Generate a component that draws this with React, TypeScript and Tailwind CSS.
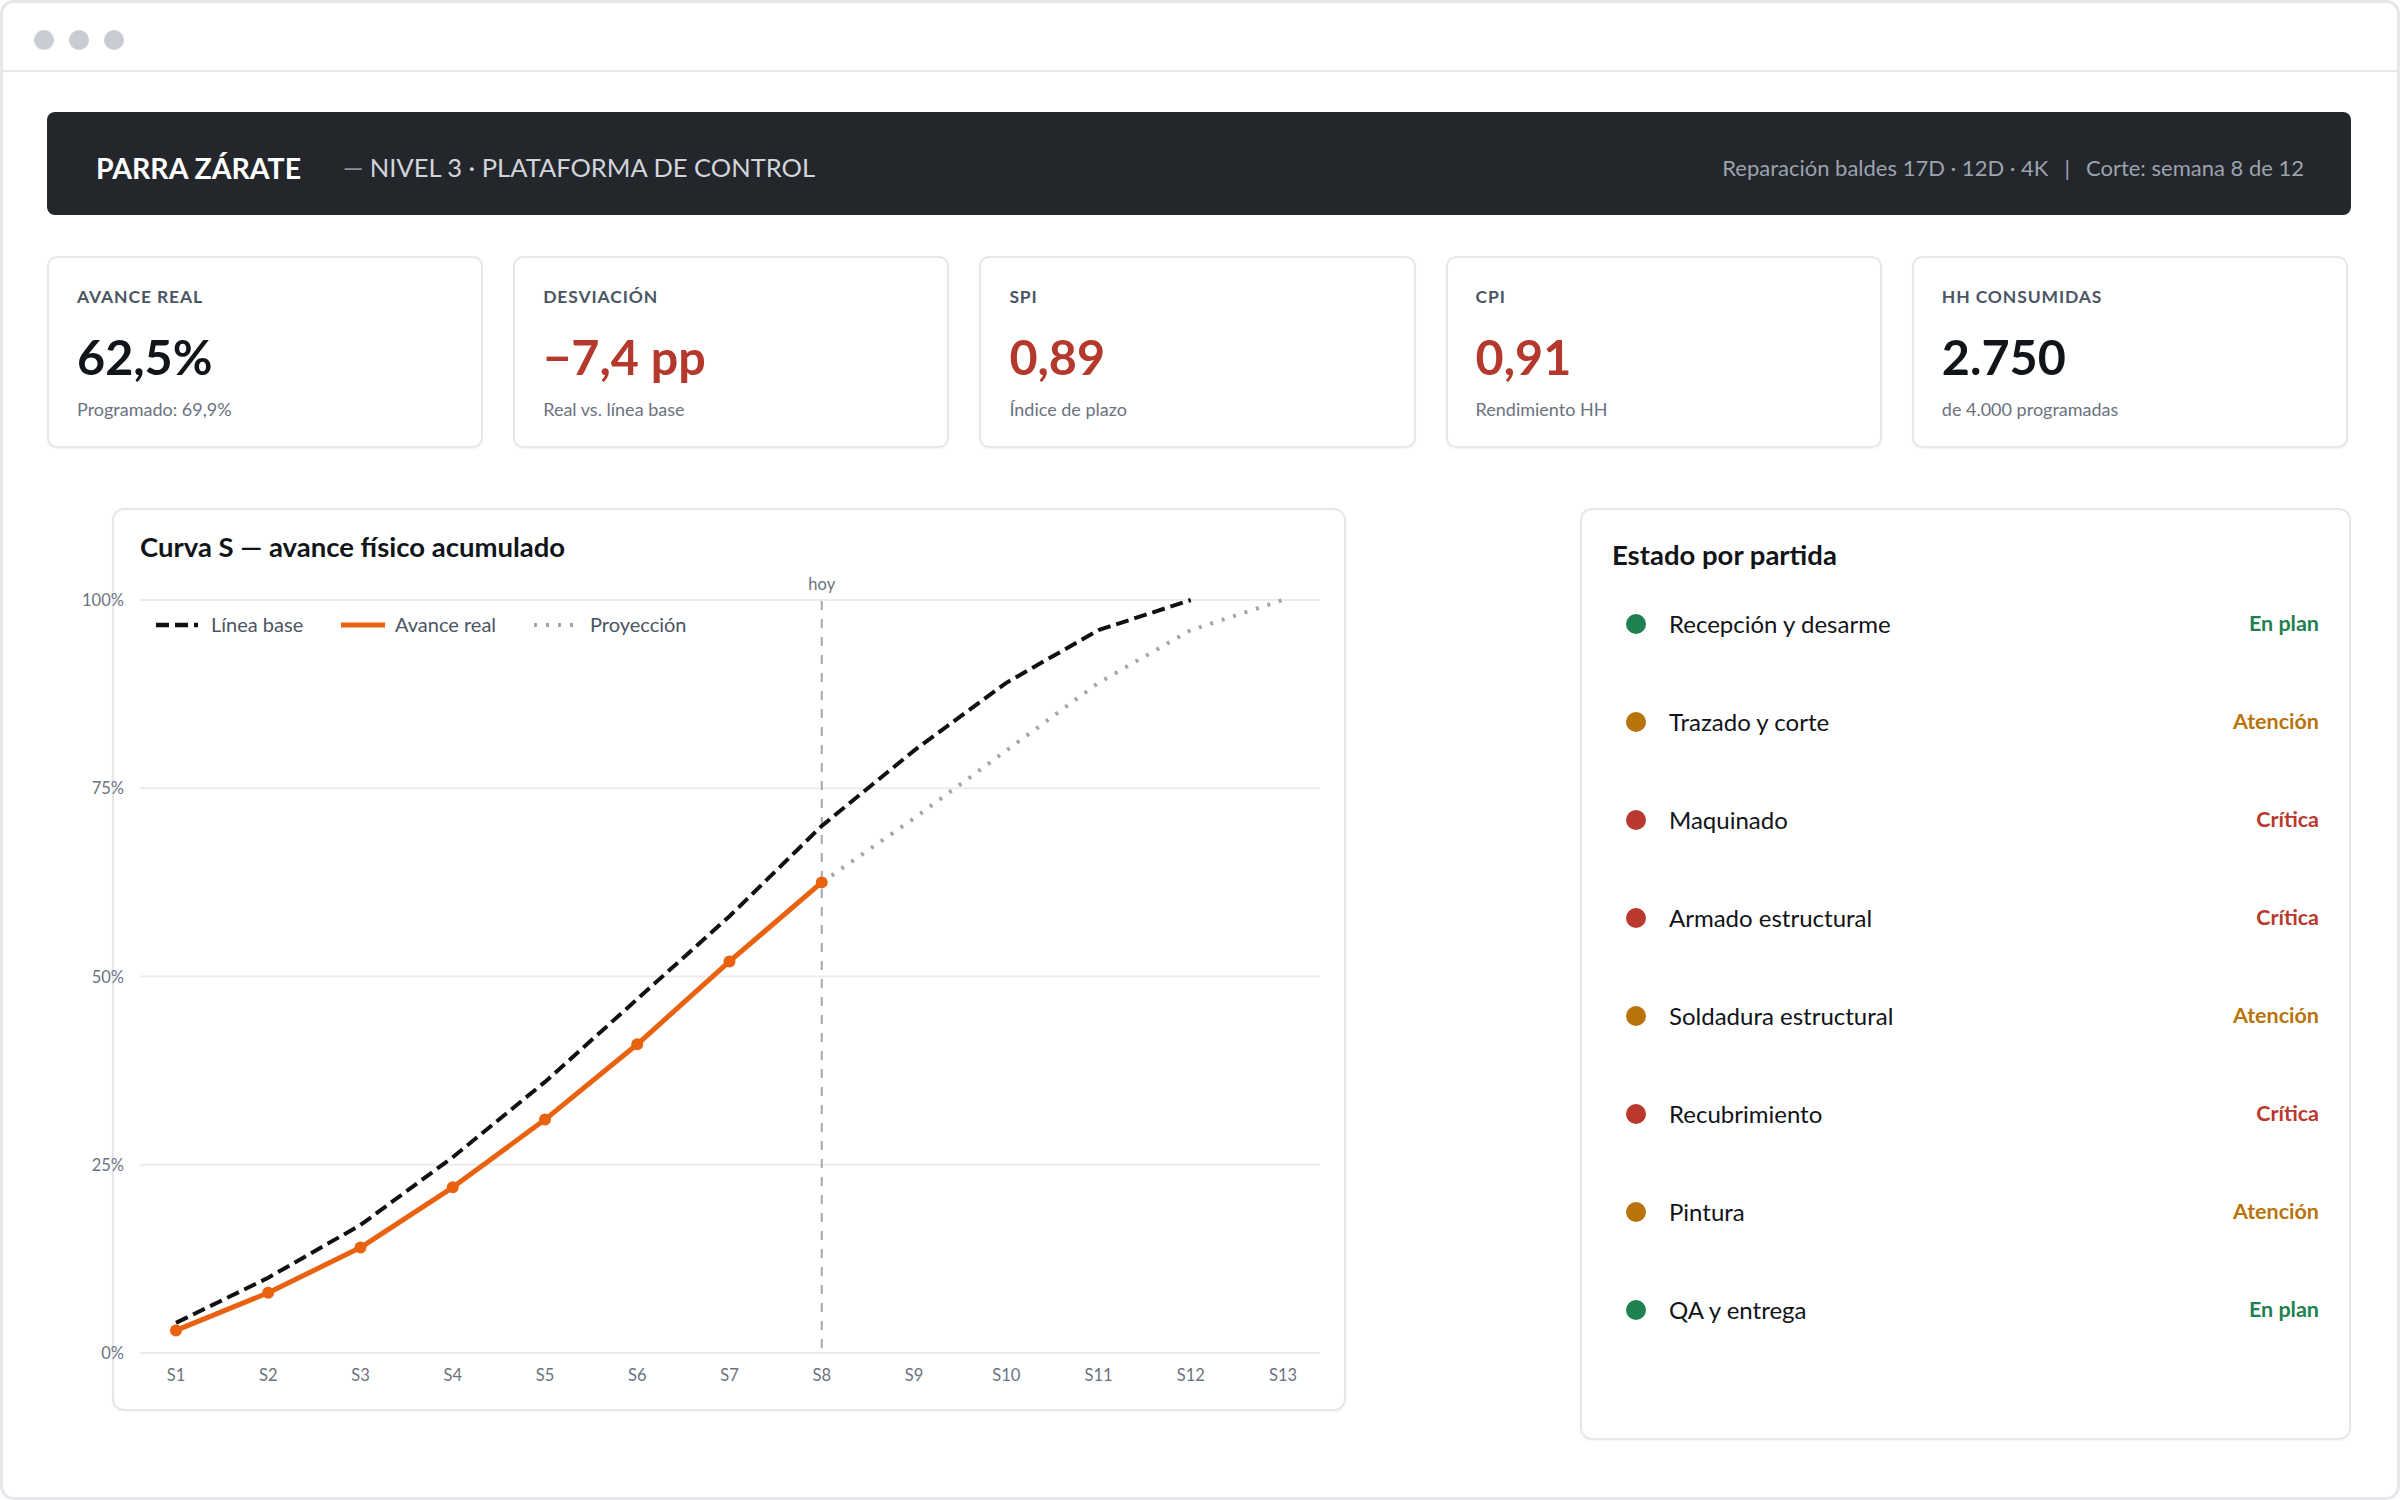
import React from "react";

const kpis = [
  { label: "AVANCE REAL", value: "62,5%", sub: "Programado: 69,9%", tone: "text-[#111418]" },
  { label: "DESVIACIÓN", value: "−7,4 pp", sub: "Real vs. línea base", tone: "text-[#b5382d]" },
  { label: "SPI", value: "0,89", sub: "Índice de plazo", tone: "text-[#b5382d]" },
  { label: "CPI", value: "0,91", sub: "Rendimiento HH", tone: "text-[#b5382d]" },
  { label: "HH CONSUMIDAS", value: "2.750", sub: "de 4.000 programadas", tone: "text-[#111418]" },
];

const estados = {
  ok: { text: "En plan", dot: "bg-[#1f8050]", color: "text-[#1f8050]" },
  warn: { text: "Atención", dot: "bg-[#b8730a]", color: "text-[#b8730a]" },
  bad: { text: "Crítica", dot: "bg-[#b9392e]", color: "text-[#b9392e]" },
} as const;

const partidas: [string, keyof typeof estados][] = [
  ["Recepción y desarme", "ok"],
  ["Trazado y corte", "warn"],
  ["Maquinado", "bad"],
  ["Armado estructural", "bad"],
  ["Soldadura estructural", "warn"],
  ["Recubrimiento", "bad"],
  ["Pintura", "warn"],
  ["QA y entrega", "ok"],
];

// curva S: % acumulado por semana
const base = [4, 10, 17, 26, 36, 47, 58, 70, 80, 89, 96, 100];
const real = [3, 8, 14, 22, 31, 41, 52, 62.5];
const proy = [62.5, 71, 80, 89, 96, 100]; // desde S8
const HOY = 7;

const xOf = (i: number) => 62 + i * 92.25;
const yOf = (p: number) => 792 - p * 7.53;
const pts = (arr: number[], from = 0) => arr.map((v, i) => `${xOf(i + from)},${yOf(v)}`).join(" ");

function CurvaS() {
  return (
    <svg width={1230} height={849} className="block overflow-visible -ml-[26px]">
      {[0, 25, 50, 75, 100].map((p) => (
        <g key={p}>
          <line x1={26} x2={1206} y1={yOf(p)} y2={yOf(p)} stroke="#ececee" strokeWidth={2} />
          <text x={10} y={yOf(p) + 6} textAnchor="end" fontSize={16.5} fill="#6b7280">
            {p}%
          </text>
        </g>
      ))}
      {Array.from({ length: 13 }, (_, i) => (
        <text key={i} x={xOf(i)} y={820} textAnchor="middle" fontSize={16.5} fill="#6b7280">
          S{i + 1}
        </text>
      ))}

      <line x1={xOf(HOY)} x2={xOf(HOY)} y1={40} y2={788} stroke="#a3a8b0" strokeWidth={2} strokeDasharray="9 9" />
      <text x={xOf(HOY)} y={29} textAnchor="middle" fontSize={16.5} fill="#6b7280">
        hoy
      </text>

      <polyline points={pts(base)} fill="none" stroke="#111111" strokeWidth={4} strokeDasharray="13 6" />
      <polyline points={pts(proy, HOY)} fill="none" stroke="#a1a5ad" strokeWidth={4} strokeDasharray="3 9" />
      <polyline points={pts(real)} fill="none" stroke="#e8620f" strokeWidth={5} strokeLinejoin="round" />
      {real.map((v, i) => (
        <circle key={i} cx={xOf(i)} cy={yOf(v)} r={6} fill="#e8620f" />
      ))}

      {/* leyenda */}
      <g fontSize={20} fill="#4b5563">
        <line x1={42} x2={84} y1={64} y2={64} stroke="#111111" strokeWidth={4.5} strokeDasharray="13 6" />
        <text x={97} y={71}>Línea base</text>
        <line x1={227} x2={271} y1={64} y2={64} stroke="#e8620f" strokeWidth={5} />
        <text x={281} y={71}>Avance real</text>
        <line x1={420} x2={462} y1={64} y2={64} stroke="#a1a5ad" strokeWidth={4} strokeDasharray="3 9" />
        <text x={476} y={71}>Proyección</text>
      </g>
    </svg>
  );
}

export default function App() {
  return (
    <div className="w-[2400px] h-[1500px] bg-white font-[Lato,sans-serif] text-[#111418]">
      <div className="h-full border-[3px] border-[#e5e7eb] rounded-[14px] flex flex-col">
        <div className="h-[69px] border-b-2 border-[#e5e7eb] flex items-center gap-[15px] pl-[31px] pt-[6px]">
          <span className="w-[20px] h-[20px] rounded-full bg-[#c9cdd3]" />
          <span className="w-[20px] h-[20px] rounded-full bg-[#c9cdd3]" />
          <span className="w-[20px] h-[20px] rounded-full bg-[#c9cdd3]" />
        </div>

        <main className="pl-[44px] pr-[46px] pt-[40px]">
          <header className="h-[103px] rounded-[8px] bg-[#23262b] flex items-center pl-[49px] pr-[47px] pt-[9px]">
            <h1 className="text-[28.5px] font-bold text-white leading-none">PARRA ZÁRATE</h1>
            <span className="ml-[42px] text-[25.5px] text-[#d1d5db] leading-none">
              <span className="text-[#8b919a]">—</span> NIVEL 3 · PLATAFORMA DE CONTROL
            </span>
            <span className="ml-auto text-[22px] text-[#9ca3af] leading-none">
              Reparación baldes 17D · 12D · 4K<span className="mx-[16px]">|</span>Corte: semana 8 de 12
            </span>
          </header>

          <section className="mt-[41px] mr-[3px] grid grid-cols-5 gap-[30px]">
            {kpis.map((k) => (
              <div
                key={k.label}
                className="h-[192px] border-2 border-[#e5e7eb] rounded-[10px] shadow-[0_1px_2px_rgba(0,0,0,0.06)] px-[28px] pt-[30px]"
              >
                <div className="text-[17.5px] font-bold tracking-[0.05em] text-[#4b5563] leading-none">{k.label}</div>
                <div className={`mt-[26px] text-[48.5px] font-bold leading-none ${k.tone}`}>{k.value}</div>
                <div className="mt-[20px] text-[18px] text-[#6b7280] leading-none">{k.sub}</div>
              </div>
            ))}
          </section>

          <section className="mt-[60px] flex items-start">
            <div className="ml-[65px] w-[1234px] h-[903px] border-2 border-[#e5e7eb] rounded-[12px] shadow-[0_1px_2px_rgba(0,0,0,0.05)] pl-[26px] pt-[23px]">
              <h2 className="text-[27.5px] font-bold leading-none">Curva S — avance físico acumulado</h2>
              <CurvaS />
            </div>

            <div className="ml-auto w-[771px] h-[932px] border-2 border-[#e5e7eb] rounded-[12px] shadow-[0_1px_2px_rgba(0,0,0,0.05)] px-[30px] pt-[31px]">
              <h2 className="text-[27.5px] font-bold leading-none">Estado por partida</h2>
              <ul className="mt-[6px]">
                {partidas.map(([nombre, e]) => (
                  <li key={nombre} className="h-[98px] flex items-center pl-[14px]">
                    <span className={`w-[20px] h-[20px] rounded-full ${estados[e].dot}`} />
                    <span className="ml-[23px] text-[24px] leading-none">{nombre}</span>
                    <span className={`ml-auto text-[21.5px] font-bold leading-none ${estados[e].color}`}>
                      {estados[e].text}
                    </span>
                  </li>
                ))}
              </ul>
            </div>
          </section>
        </main>
      </div>
    </div>
  );
}
